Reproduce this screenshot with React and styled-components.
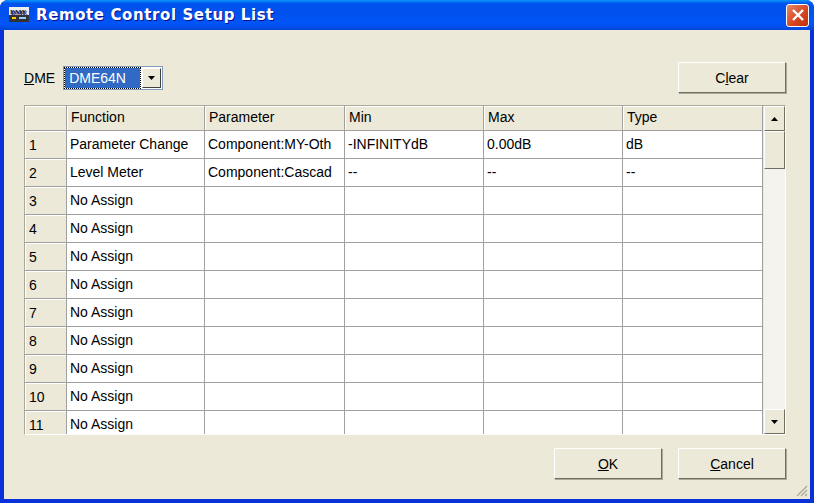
import React from "react";
import styled, { createGlobalStyle } from "styled-components";

const Global = createGlobalStyle`
  html, body { margin: 0; padding: 0; background: #fff; }
  body { font-family: "Liberation Sans", Arial, sans-serif; font-size: 14px; color: #000; }
`;

const Win = styled.div`
  width: 814px;
  height: 503px;
  box-sizing: border-box;
  display: flex;
  flex-direction: column;
  background: #0831d9;
  border-radius: 8px 8px 0 0;
  overflow: hidden;
`;

const TitleBar = styled.div`
  height: 30px;
  flex: none;
  display: flex;
  align-items: center;
  padding: 0 5px 0 9px;
  background: linear-gradient(180deg, #0997ff 0%, #0053ee 12%, #0050ee 40%, #0055f8 80%, #0046d8 100%);
  color: #fff;
  font-family: "DejaVu Sans", Verdana, sans-serif;
  font-weight: bold;
  font-size: 15px;
  text-shadow: 1px 1px #0f1089;
`;

const TitleText = styled.span`
  margin-left: 7px;
  letter-spacing: 0.6px;
  flex: 1;
`;

const CloseBtn = styled.div`
  width: 21px;
  height: 21px;
  border: 1px solid #fff;
  border-radius: 3px;
  background: linear-gradient(135deg, #e5896a, #d5431d 60%, #c0300f);
  display: flex;
  align-items: center;
  justify-content: center;
`;

const Body = styled.div`
  flex: 1;
  margin: 0 4px 4px 4px;
  background: #ece9d8;
  display: flex;
  flex-direction: column;
  padding: 32px 24px 0 20px;
  position: relative;
`;

const TopRow = styled.div`
  display: flex;
  align-items: center;
  height: 31px;
  margin-bottom: 12px;
`;

const Label = styled.span`
  margin-right: 8px;
`;

const Combo = styled.div`
  display: flex;
  height: 20px;
  width: 96px;
  border: 1px solid #7f9db9;
  background: #fff;
  padding: 1px;
`;

const ComboValue = styled.div`
  flex: 1;
  background: #316ac5;
  color: #fff;
  outline: 1px dotted #000;
  padding-left: 4px;
  line-height: 20px;
  margin-right: 2px;
`;

const ComboArrow = styled.div`
  width: 17px;
  background: #ece9d8;
  border: 1px solid;
  border-color: #fff #404040 #404040 #fff;
  display: flex;
  align-items: center;
  justify-content: center;
`;

const Spacer = styled.div`flex: 1;`;

const Button = styled.div`
  width: 108px;
  height: 31px;
  box-sizing: border-box;
  border: 1px solid;
  border-color: #fff #716f64 #716f64 #fff;
  box-shadow: 1px 1px 0 #aca899;
  background: #ece9d8;
  display: flex;
  align-items: center;
  justify-content: center;
  margin-left: ${(p) => (p.gap ? "16px" : "0")};
`;

const Grid = styled.div`
  height: 328px;
  border: 1px solid;
  border-color: #aca899 #fff #fff #aca899;
  display: flex;
  background: #ece9d8;
  overflow: hidden;
`;

const Table = styled.div`
  flex: 1;
  display: grid;
  grid-template-columns: 42px 138px 140px 139px 139px 140px;
  grid-auto-rows: 28px;
  grid-template-rows: 25px;
  align-content: start;
`;

const Head = styled.div`
  background: #ece9d8;
  border-right: 1px solid #a0a0a0;
  border-bottom: 1px solid #a0a0a0;
  box-shadow: inset 1px 1px 0 #fff;
  padding: 3px 4px 0 4px;
`;

const Num = styled(Head)`
  padding-top: 6px;
`;

const Cell = styled.div`
  background: #fff;
  border-right: 1px solid #a0a0a0;
  border-bottom: 1px solid #a0a0a0;
  padding: 5px 0 0 3px;
  white-space: nowrap;
  overflow: hidden;
`;

const Scroll = styled.div`
  width: 21px;
  display: flex;
  flex-direction: column;
  background: #f4f3ee;
`;

const SBtn = styled.div`
  height: 23px;
  background: #ece9d8;
  border: 1px solid;
  border-color: #fff #716f64 #716f64 #fff;
  display: flex;
  align-items: center;
  justify-content: center;
  flex: none;
`;

const Thumb = styled(SBtn)`
  height: 36px;
`;

const Bottom = styled.div`
  display: flex;
  justify-content: flex-end;
  margin-top: 13px;
`;

const Grip = styled.svg`
  position: absolute;
  right: 2px;
  bottom: 2px;
`;

const U = styled.u`text-decoration: underline;`;

const Tri = ({ up }) => (
  <svg width="7" height="4" viewBox="0 0 7 4">
    <path d={up ? "M3.5 0L7 4H0z" : "M0 0h7L3.5 4z"} fill="#000" />
  </svg>
);

const rows = [
  ["Parameter Change", "Component:MY-Oth", "-INFINITYdB", "0.00dB", "dB"],
  ["Level Meter", "Component:Cascad", "--", "--", "--"],
];
for (let i = 0; i < 9; i++) rows.push(["No Assign", "", "", "", ""]);

export default function App() {
  return (
    <Win>
      <Global />
      <TitleBar>
        <svg width="20" height="16" viewBox="0 0 20 16">
          <rect x="0" y="0" width="20" height="8" fill="#eee" />
          <text x="1" y="7" fontSize="7" fontWeight="bold" fill="#223" fontFamily="Liberation Serif">DME</text>
          <rect x="0" y="8" width="20" height="7" fill="#333" />
          <rect x="3" y="10" width="4" height="2" fill="#fc0" />
          <rect x="10" y="10" width="7" height="2" fill="#9cf" />
        </svg>
        <TitleText>Remote Control Setup List</TitleText>
        <CloseBtn>
          <svg width="12" height="12" viewBox="0 0 12 12">
            <path d="M1 1L11 11M11 1L1 11" stroke="#fff" strokeWidth="2.4" />
          </svg>
        </CloseBtn>
      </TitleBar>
      <Body>
        <TopRow>
          <Label><U>D</U>ME</Label>
          <Combo>
            <ComboValue>DME64N</ComboValue>
            <ComboArrow><Tri /></ComboArrow>
          </Combo>
          <Spacer />
          <Button>C<U>l</U>ear</Button>
        </TopRow>
        <Grid>
          <Table>
            <Head />
            <Head>Function</Head>
            <Head>Parameter</Head>
            <Head>Min</Head>
            <Head>Max</Head>
            <Head>Type</Head>
            {rows.map((r, i) => (
              <React.Fragment key={i}>
                <Num>{i + 1}</Num>
                {r.map((c, j) => (
                  <Cell key={j}>{c}</Cell>
                ))}
              </React.Fragment>
            ))}
          </Table>
          <Scroll>
            <SBtn><Tri up /></SBtn>
            <Thumb />
            <Spacer />
            <SBtn><Tri /></SBtn>
          </Scroll>
        </Grid>
        <Bottom>
          <Button><U>O</U>K</Button>
          <Button gap><U>C</U>ancel</Button>
        </Bottom>
        <Grip width="12" height="12" viewBox="0 0 12 12">
          <path d="M11 1L1 11M11 5L5 11M11 9L9 11" stroke="#aca899" strokeWidth="1.2" />
        </Grip>
      </Body>
    </Win>
  );
}
